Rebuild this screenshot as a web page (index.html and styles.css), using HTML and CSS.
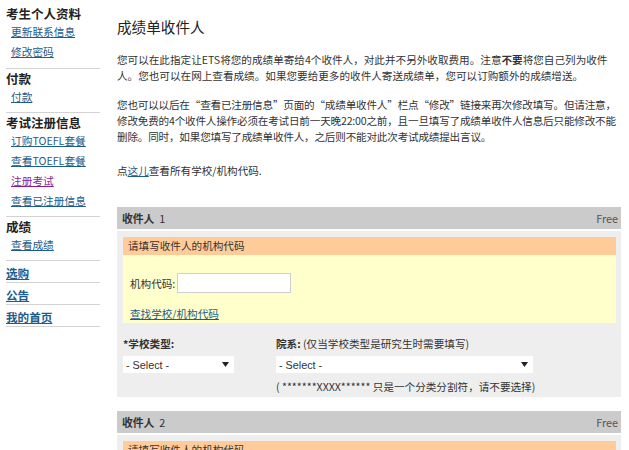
FILE: index.html
```html
<!DOCTYPE html>
<html lang="zh-CN">
<head>
<meta charset="utf-8">
<title>成绩单收件人</title>
<link rel="stylesheet" href="styles.css">
</head>
<body>
<div class="page">
  <nav class="side">
    <div class="side-sec first">
      <div class="side-h">考生个人资料</div>
      <a class="side-link" href="#">更新联系信息</a>
      <a class="side-link" href="#">修改密码</a>
    </div>
    <div class="side-sec">
      <div class="side-h">付款</div>
      <a class="side-link" href="#">付款</a>
    </div>
    <div class="side-sec">
      <div class="side-h">考试注册信息</div>
      <a class="side-link" href="#">订购TOEFL套餐</a>
      <a class="side-link" href="#">查看TOEFL套餐</a>
      <a class="side-link visited" href="#">注册考试</a>
      <a class="side-link" href="#">查看已注册信息</a>
    </div>
    <div class="side-sec">
      <div class="side-h">成绩</div>
      <a class="side-link" href="#">查看成绩</a>
    </div>
    <div class="side-sec bold-sec"><a class="side-bold" href="#">选购</a></div>
    <div class="side-sec bold-sec"><a class="side-bold" href="#">公告</a></div>
    <div class="side-sec bold-sec"><a class="side-bold" href="#">我的首页</a></div>
  </nav>

  <main class="main">
    <h1 class="title">成绩单收件人</h1>
    <p class="para p1">您可以在此指定让ETS将您的成绩单寄给4个收件人，对此并不另外收取费用。注意<b>不要</b>将您自己列为收件人。您也可以在网上查看成绩。如果您要给更多的收件人寄送成绩单，您可以订购额外的成绩增送。</p>
    <p class="para p2">您也可以以后在“查看已注册信息”页面的“成绩单收件人”栏点“修改”链接来再次修改填写。但请注意，修改免费的4个收件人操作必须在考试日前一天晚22:00之前，且一旦填写了成绩单收件人信息后只能修改不能删除。同时，如果您填写了成绩单收件人，之后则不能对此次考试成绩提出言议。</p>
    <p class="para p3">点<a href="#">这儿</a>查看所有学校/机构代码.</p>

    <section class="recip">
      <div class="recip-bar"><span><b>收件人</b>&nbsp; 1</span><span class="free">Free</span></div>
      <div class="recip-panel">
        <div class="notice">请填写收件人的机构代码</div>
        <div class="code-box">
          <div class="code-row"><span>机构代码:</span><input class="code-input" type="text"></div>
          <a class="find-link" href="#">查找学校/机构代码</a>
        </div>
        <div class="fields">
          <div class="field f1">
            <div class="flabel"><b>*学校类型:</b></div>
            <div class="select s1"><span>- Select -</span><svg width="7" height="5" viewBox="0 0 7 5"><path d="M0 0H7L3.5 5Z" fill="#222"/></svg></div>
          </div>
          <div class="field f2">
            <div class="flabel"><b>院系:</b> (仅当学校类型是研究生时需要填写)</div>
            <div class="select s2"><span>- Select -</span><svg width="7" height="5" viewBox="0 0 7 5"><path d="M0 0H7L3.5 5Z" fill="#222"/></svg></div>
            <div class="fnote">( *******XXXX****** 只是一个分类分割符，请不要选择)</div>
          </div>
        </div>
      </div>
    </section>

    <section class="recip">
      <div class="recip-bar"><span><b>收件人</b>&nbsp; 2</span><span class="free">Free</span></div>
      <div class="recip-panel">
        <div class="notice">请填写收件人的机构代码</div>
        <div class="code-box">
          <div class="code-row"><span>机构代码:</span><input class="code-input" type="text"></div>
          <a class="find-link" href="#">查找学校/机构代码</a>
        </div>
      </div>
    </section>
  </main>
</div>
</body>
</html>
```

FILE: styles.css
```css
html, body {
  margin: 0;
  padding: 0;
  background: #fff;
}
body {
  font-family: "Noto Sans CJK SC", "Liberation Sans", sans-serif;
  color: #333;
  font-size: 10.6px;
}
a { color: #1d5c8c; }

.page {
  display: flex;
  align-items: flex-start;
  padding-left: 6px;
}

/* sidebar */
.side {
  width: 94px;
  flex: none;
  display: flex;
  flex-direction: column;
}
.side-sec {
  display: flex;
  flex-direction: column;
  padding: 2px 0 5px;
  border-bottom: 1px solid #d2d2d2;
}
.side-sec.first { padding-top: 6px; padding-bottom: 6px; }
.side-h {
  font-weight: bold;
  font-size: 12.5px;
  line-height: 16px;
  color: #222;
}
.side-link {
  font-size: 10.7px;
  line-height: 20px;
  padding-left: 5px;
  align-self: flex-start;
}
.side-link.visited { color: #8a1f94; }
.side-sec.bold-sec { padding: 3px 0 0; }
.side-bold {
  font-weight: bold;
  font-size: 11.6px;
  line-height: 18px;
  align-self: flex-start;
}

/* main */
.main {
  margin-left: 17px;
  width: 504px;
  flex: none;
}
.title {
  margin: 17px 0 0;
  font-size: 14.6px;
  line-height: 20px;
  font-weight: normal;
  color: #222;
}
.para {
  margin: 0;
  line-height: 16px;
}
.p1 { margin-top: 15px; }
.p1 b { font-weight: bold; }
.p2 { margin-top: 13px; letter-spacing: -0.2px; }
.p3 { margin-top: 18px; }

.recip { margin-top: 28px; }
.recip + .recip { margin-top: 14px; }
.recip-bar {
  background: #cbcbcb;
  height: 22px;
  display: flex;
  justify-content: space-between;
  align-items: center;
  padding: 0 3px 0 5px;
  font-size: 10.8px;
  color: #333;
}
.free { color: #555; }
.recip-panel {
  margin-top: 2px;
  background: #eeeeee;
  padding: 6px 5px 3px 6px;
}
.notice {
  background: #ffcc99;
  height: 18px;
  line-height: 18px;
  padding-left: 5px;
}
.code-box {
  background: #ffffcc;
  padding: 18px 7px 2px;
}
.code-row {
  display: flex;
  align-items: center;
  gap: 2px;
}
.code-input {
  width: 114px;
  height: 20px;
  box-sizing: border-box;
  border: 1px solid #cfcfcf;
  background: #fff;
  margin: 0;
  padding: 0;
}
.find-link {
  display: inline-block;
  margin-top: 14px;
  line-height: 14px;
}

.fields {
  display: flex;
}
.field.f1 { width: 153px; }
.flabel {
  margin-top: 14px;
  line-height: 14px;
}
.flabel b { font-weight: bold; }
.select {
  margin-top: 5px;
  height: 17px;
  background: #fff;
  display: flex;
  align-items: center;
  justify-content: space-between;
  padding: 0 5px 0 3px;
  box-sizing: border-box;
  font-size: 10.8px;
  font-family: "Liberation Sans", "Noto Sans CJK SC", sans-serif;
}
.s1 { width: 111px; }
.s2 { width: 257px; }
.fnote {
  margin-top: 7px;
  line-height: 14px;
}
```
